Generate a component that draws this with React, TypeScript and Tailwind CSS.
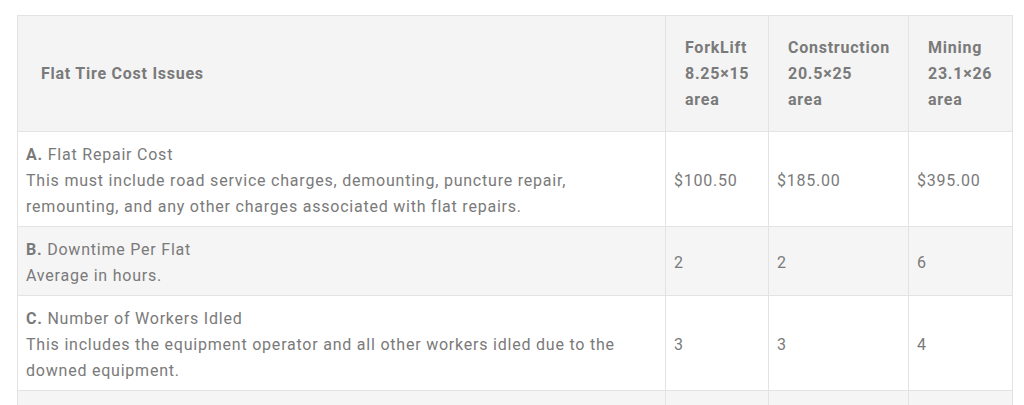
import React from "react";

const rows = [
  {
    letter: "A.",
    title: "Flat Repair Cost",
    desc: "This must include road service charges, demounting, puncture repair, remounting, and any other charges associated with flat repairs.",
    vals: ["$100.50", "$185.00", "$395.00"],
  },
  {
    letter: "B.",
    title: "Downtime Per Flat",
    desc: "Average in hours.",
    vals: ["2", "2", "6"],
  },
  {
    letter: "C.",
    title: "Number of Workers Idled",
    desc: "This includes the equipment operator and all other workers idled due to the downed equipment.",
    vals: ["3", "3", "4"],
  },
];

const cell = "border border-[#e3e3e3]";

export default function App() {
  return (
    <div
      className="w-[1024px] h-[405px] overflow-hidden bg-white pt-[15px] pl-[17px]"
      style={{ fontFamily: "Roboto, 'Liberation Sans', sans-serif" }}
    >
      <table className="w-[995px] table-fixed border-collapse border border-[#e3e3e3] text-[16px] leading-[26px] text-[#7a7a7a]">
        <colgroup>
          <col className="w-[648px]" />
          <col className="w-[103px]" />
          <col className="w-[140px]" />
          <col className="w-[104px]" />
        </colgroup>
        <thead>
          <tr className="bg-[#f4f4f4]">
            <th className={`${cell} pl-[23px] pr-[20px] py-[18.5px] text-left align-middle font-bold tracking-[0.75px]`}>
              Flat Tire Cost Issues
            </th>
            <th className={`${cell} pl-[19px] pr-[4px] py-[18.5px] text-left align-middle font-bold tracking-[0.75px]`}>
              ForkLift
              <br />
              8.25×15
              <br />
              area
            </th>
            <th className={`${cell} pl-[19px] pr-[4px] py-[18.5px] text-left align-middle font-bold tracking-[0.75px]`}>
              Construction
              <br />
              20.5×25
              <br />
              area
            </th>
            <th className={`${cell} pl-[19px] pr-[4px] py-[18.5px] text-left align-middle font-bold tracking-[0.75px]`}>
              Mining
              <br />
              23.1×26
              <br />
              area
            </th>
          </tr>
        </thead>
        <tbody>
          {rows.map((r, i) => (
            <tr key={r.letter} className={i % 2 === 1 ? "bg-[#f5f5f5]" : "bg-white"}>
              <td className={`${cell} pl-[8px] pr-[20px] pt-[9.5px] pb-[6.5px] align-middle tracking-[0.78px]`}>
                <b className="font-bold">{r.letter}</b> {r.title}
                <br />
                {r.desc}
              </td>
              {r.vals.map((v, j) => (
                <td key={j} className={`${cell} px-[8px] pt-[9.5px] pb-[6.5px] align-middle tracking-[0.78px]`}>
                  {v}
                </td>
              ))}
            </tr>
          ))}
          <tr className="bg-[#f5f5f5]">
            <td className={`${cell} h-[60px]`}></td>
            <td className={cell}></td>
            <td className={cell}></td>
            <td className={cell}></td>
          </tr>
        </tbody>
      </table>
    </div>
  );
}
